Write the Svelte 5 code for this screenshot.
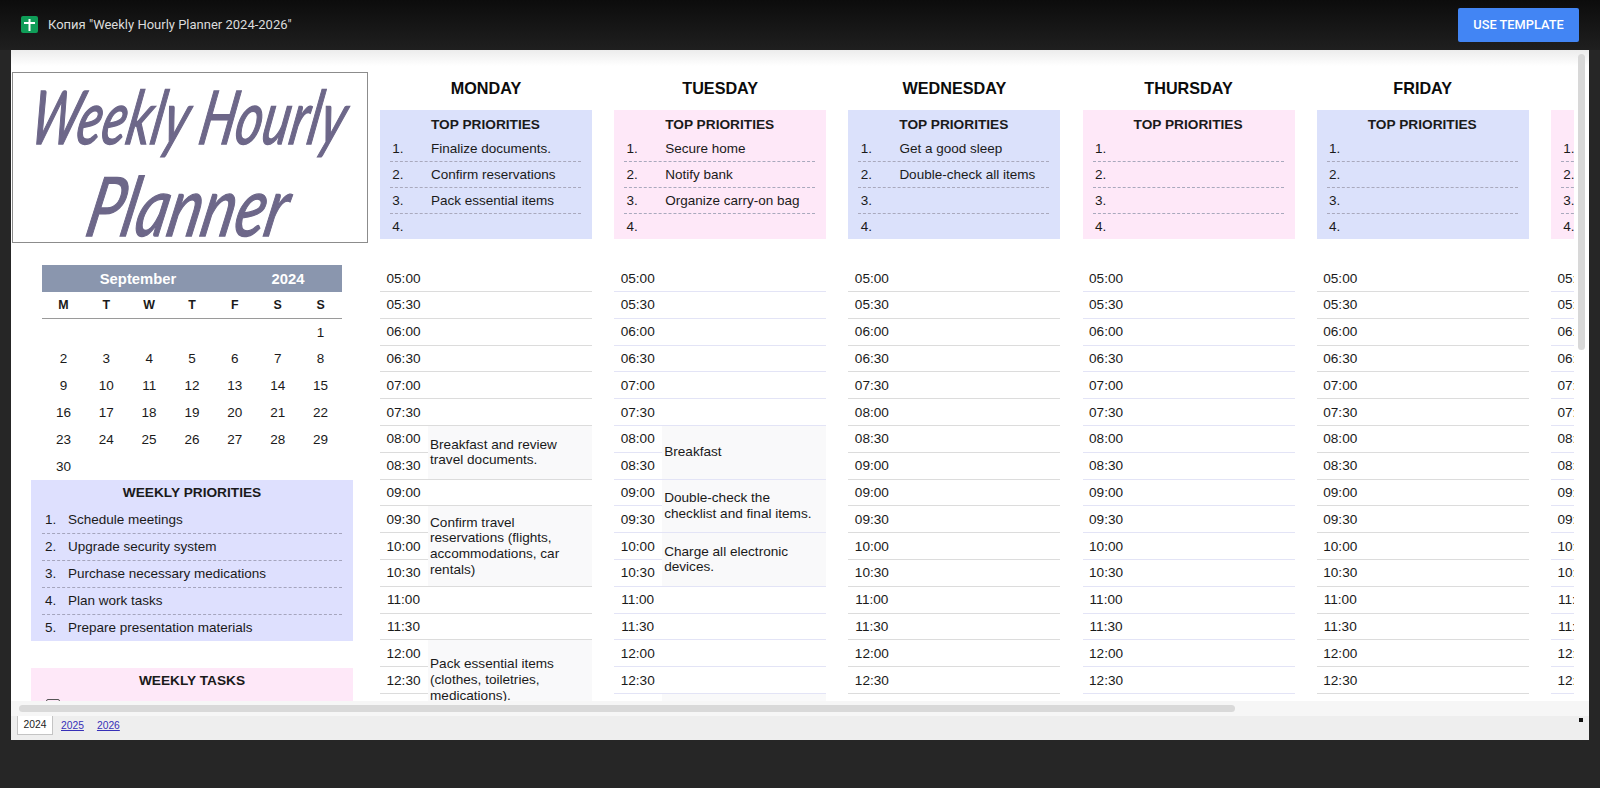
<script>
  const slots = ['05:00','05:30','06:00','06:30','07:00','07:30','08:00','08:30','09:00','09:30','10:00','10:30','11:00','11:30','12:00','12:30',''];
  const wed = ['05:00','05:30','06:00','06:30','07:30','08:00','08:30','09:00','09:00','09:30','10:00','10:30','11:00','11:30','12:00','12:30',''];
  const days = [
    { name:'MONDAY', tone:'blue', items:['Finalize documents.','Confirm reservations','Pack essential items',''], times:slots, events:[
      {start:6,span:2,text:'Breakfast and review travel documents.'},
      {start:9,span:3,text:'Confirm travel reservations (flights, accommodations, car rentals)'},
      {start:14,span:3,text:'Pack essential items (clothes, toiletries, medications).'} ] },
    { name:'TUESDAY', tone:'pink', items:['Secure home','Notify bank','Organize carry-on bag',''], times:slots, events:[
      {start:6,span:2,text:'Breakfast'},
      {start:8,span:2,text:'Double-check the checklist and final items.'},
      {start:10,span:2,text:'Charge all electronic devices.'},
      {start:16,span:1,text:''} ] },
    { name:'WEDNESDAY', tone:'blue', items:['Get a good sleep','Double-check all items','',''], times:wed, events:[] },
    { name:'THURSDAY', tone:'pink', items:['','','',''], times:slots, events:[] },
    { name:'FRIDAY', tone:'blue', items:['','','',''], times:slots, events:[] },
    { name:'SATURDAY', tone:'pink', items:['','','',''], times:slots, events:[] }
  ];
  function cells(day){
    const out=[];
    day.times.forEach((t,i)=>{
      out.push({kind:'time',row:i,text:t});
      const ev=day.events.find(e=>e.start===i);
      const inside=day.events.some(e=>i>e.start&&i<e.start+e.span);
      if(ev) out.push({kind:'event',row:i,span:ev.span,text:ev.text});
      else if(!inside) out.push({kind:'free',row:i});
    });
    return out;
  }
  const dow=['M','T','W','T','F','S','S'];
  const dates=['','','','','','',1,2,3,4,5,6,7,8,9,10,11,12,13,14,15,16,17,18,19,20,21,22,23,24,25,26,27,28,29,30];
  const weekly=['Schedule meetings','Upgrade security system','Purchase necessary medications','Plan work tasks','Prepare presentation materials'];
</script>

<div class="page">
  <header class="topbar">
    <svg class="doc" width="17" height="17" viewBox="0 0 17 17" aria-hidden="true">
      <rect width="17" height="17" rx="2" fill="#0f9d58"/>
      <rect x="3" y="6" width="11" height="2" fill="#fff"/>
      <rect x="7.5" y="3" width="2" height="12" fill="#fff"/>
    </svg>
    <span class="doc-title">Копия "Weekly Hourly Planner 2024-2026"</span>
    <button class="use">USE TEMPLATE</button>
  </header>

  <main class="frame">
    <div class="shade"></div>
    <div class="vbar"></div>
    <section class="sheet">
      <aside class="left">
        <div class="logo">
          <span class="logo-a">Weekly Hourly</span>
          <span class="logo-b">Planner</span>
        </div>
        <div class="cal">
          <div class="cal-head"><span>September</span><span>2024</span></div>
          <div class="cal-grid">
            {#each dow as d}<b class="dow">{d}</b>{/each}
            {#each dates as d}<span class="date">{d}</span>{/each}
          </div>
        </div>
        <div class="wp">
          <h3>WEEKLY PRIORITIES</h3>
          {#each weekly as w,i}
            <div class="wp-row"><span>{i+1}.</span><span>{w}</span></div>
          {/each}
        </div>
        <div class="wt">
          <h3>WEEKLY TASKS</h3>
          <div class="check"></div>
        </div>
      </aside>

      <div class="days">
        {#each days as day}
          <article class="day">
            <h2>{day.name}</h2>
            <div class="top {day.tone}">
              <h3>TOP PRIORITIES</h3>
              {#each day.items as item,i}
                <div class="top-row"><span class="num">{i+1}.</span><span>{item}</span></div>
              {/each}
            </div>
            <div class="hours {day.tone}">
              {#each cells(day) as c}
                {#if c.kind==='time'}
                  <div class="cell time" style:grid-row={c.row+1}>{c.text}</div>
                {:else if c.kind==='event'}
                  <div class="cell event" style:grid-row="{c.row+1} / span {c.span}">{c.text}</div>
                {:else}
                  <div class="cell free" style:grid-row={c.row+1}></div>
                {/if}
              {/each}
            </div>
          </article>
        {/each}
      </div>
    </section>

    <div class="hscroll"><div class="hthumb"></div></div>
    <nav class="tabs">
      <span class="tab">2024</span>
      <a href="#2025">2025</a>
      <a href="#2026">2026</a>
      <i class="mini"></i>
    </nav>
  </main>
</div>

<style>
  :global(body){margin:0;background:#262626;}
  .page{width:1600px;height:788px;overflow:hidden;background:#262626;font-family:"Liberation Sans",Arial,sans-serif;color:#1a1a1a;}
  .topbar{height:50px;box-sizing:border-box;display:flex;align-items:center;padding:0 21px;background:linear-gradient(#0c0c0c,#1f1f1f);}
  .doc{flex:none;margin-top:-1px;}
  .doc-title{margin-left:10px;font:13px Roboto,sans-serif;color:#dcdcdc;margin-top:-1px;}
  .use{margin-left:auto;width:121px;height:34px;border:0;border-radius:2px;background:#4285f4;color:#fff;font:500 12.8px Roboto,sans-serif;padding:0;margin-top:-1px;}
  .frame{position:relative;width:1578px;height:690px;margin-left:11px;background:#fff;overflow:hidden;}
  .shade{position:absolute;left:0;right:0;top:0;height:16px;background:linear-gradient(#ececec,rgba(255,255,255,0));z-index:2;}
  .vbar{position:absolute;left:1567px;top:4px;width:7px;height:296px;border-radius:4px;background:#d8d8d8;z-index:3;}
  .sheet{height:651px;display:flex;gap:12px;padding-left:1px;margin-right:15px;overflow:hidden;box-sizing:border-box;}
  .left{flex:none;width:356px;padding-top:22px;box-sizing:border-box;}
  .logo{height:171px;box-sizing:border-box;border:1px solid #8c8c8c;display:flex;flex-direction:column;align-items:center;font-family:Lato,sans-serif;font-style:italic;color:#6d6789;-webkit-text-stroke:1px #6d6789;line-height:1;}
  .logo-a{font-size:51px;letter-spacing:.5px;transform:scaleY(1.45) skewX(-16deg);margin-top:17px;white-space:nowrap;}
  .logo-b{font-size:63px;transform:scaleY(1.3) skewX(-16deg);margin-top:32px;}
  .cal{margin:22px 0 0 30px;width:300px;}
  .cal-head{height:27px;display:grid;grid-template-columns:192px 108px;align-items:center;text-align:center;background:#8a96ae;color:#fff;font-weight:700;font-size:14.8px;}
  .cal-grid{display:grid;grid-template-columns:repeat(7,1fr);grid-auto-rows:26.8px;}
  .dow{border-bottom:1px solid #9a9a9a;display:flex;align-items:center;justify-content:center;font-size:12.4px;}
  .date{display:flex;align-items:center;justify-content:center;font-size:13.5px;}
  h3{margin:0;font-weight:700;text-align:center;font-size:13.7px;}
  .wp{margin:0 0 0 19px;width:322px;height:161px;background:#dee0fe;padding:0 11px;box-sizing:border-box;}
  .wp h3{height:26px;line-height:25px;}
  .wp-row{height:27px;box-sizing:border-box;display:grid;grid-template-columns:23px 1fr;align-items:center;padding-left:3px;font-size:13.5px;border-top:1px dashed #a5a5bd;}
  .wp-row:first-of-type{border-top:0;}
  .wt{margin:27px 0 0 19px;width:322px;height:60px;background:#fee8f8;position:relative;}
  .wt h3{height:26px;line-height:25px;}
  .check{position:absolute;left:15px;top:31px;width:12px;height:12px;border:1px solid #555;border-radius:2px;}
  .days{flex:1;min-width:0;display:flex;gap:22.2px;overflow:hidden;padding-top:22px;}
  .day{flex:none;width:212px;}
  h2{margin:0;height:38px;line-height:33px;text-align:center;font-size:16.2px;font-weight:700;color:#0c0c0c;}
  .top{height:129px;box-sizing:border-box;padding:0 11px 0 10px;}
  .top.blue{background:#dbe1fb;}
  .top.pink{background:#fee8f8;}
  .top h3{height:26px;line-height:29px;}
  .top-row{height:26px;box-sizing:border-box;display:grid;grid-template-columns:16px 1fr;column-gap:25px;align-items:center;font-size:13.5px;border-top:1px dashed #a9a9bd;padding-bottom:1px;}
  .top h3 + .top-row{border-top:0;height:25px;}
  .num{text-align:center;}
  .hours{margin-top:26.2px;display:grid;grid-template-columns:48px 1fr;grid-auto-rows:26.8px;}
  .cell{box-sizing:border-box;border-bottom:1.5px solid #dcdcdc;font-size:13.6px;display:flex;align-items:center;}
  .hours.pink .cell{border-bottom-color:#e3e4f6;}
  .time{grid-column:1;justify-content:center;padding-right:1px;}
  .free{grid-column:2;}
  .event{grid-column:2;background:#f9f9fa;padding:0 12px 0 2px;line-height:15.7px;}
  .hscroll{height:15px;background:#f6f6f6;padding:4px 0 0 8px;box-sizing:border-box;position:relative;}
  .hthumb{width:1216px;height:7px;border-radius:4px;background:#d9d9d9;}
  .tabs{height:24px;background:#eeeeee;display:flex;align-items:flex-start;position:relative;padding-left:6px;font-size:10.3px;}
  .tab{width:36px;height:19px;box-sizing:border-box;background:#fff;border:1px solid #c4c4c4;border-top:0;text-align:center;line-height:18px;color:#222;}
  .tabs a{color:#3730b8;margin-left:8px;line-height:19px;margin-right:5px;}
  .mini{position:absolute;left:1568px;top:2px;width:4px;height:4px;background:#111;}
</style>
